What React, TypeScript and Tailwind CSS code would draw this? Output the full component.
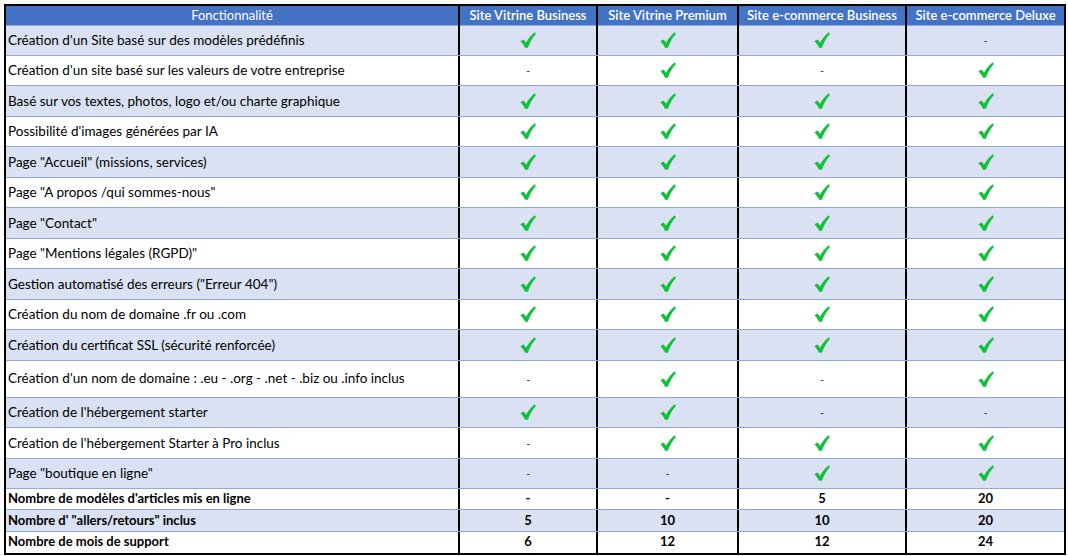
import React from "react";

type Cell = boolean | string;

const rows: { label: string; cells: Cell[]; tall?: boolean; bold?: boolean }[] = [
  { label: "Création d'un Site basé sur des modèles prédéfinis", cells: [true, true, true, false] },
  { label: "Création d'un site basé sur les valeurs de votre entreprise", cells: [false, true, false, true] },
  { label: "Basé sur vos textes, photos, logo et/ou charte graphique", cells: [true, true, true, true] },
  { label: "Possibilité d'images générées par IA", cells: [true, true, true, true] },
  { label: 'Page "Accueil" (missions, services)', cells: [true, true, true, true] },
  { label: 'Page "A propos /qui sommes-nous"', cells: [true, true, true, true] },
  { label: 'Page "Contact"', cells: [true, true, true, true] },
  { label: 'Page "Mentions légales (RGPD)"', cells: [true, true, true, true] },
  { label: 'Gestion automatisé des erreurs ("Erreur 404")', cells: [true, true, true, true] },
  { label: "Création du nom de domaine .fr ou .com", cells: [true, true, true, true] },
  { label: "Création du certificat SSL (sécurité renforcée)", cells: [true, true, true, true] },
  {
    label: "Création d'un nom de domaine :  .eu - .org - .net - .biz ou .info inclus",
    cells: [false, true, false, true],
    tall: true,
  },
  { label: "Création de l'hébergement starter", cells: [true, true, false, false] },
  { label: "Création de l'hébergement Starter à Pro inclus", cells: [false, true, true, true] },
  { label: 'Page "boutique en ligne"', cells: [false, false, true, true] },
  { label: "Nombre de modèles d'articles mis en ligne", cells: ["-", "-", "5", "20"], bold: true },
  { label: 'Nombre d\' "allers/retours" inclus', cells: ["5", "10", "10", "20"], bold: true },
  { label: "Nombre de mois de support", cells: ["6", "12", "12", "24"], bold: true },
];

const headers = [
  "Site Vitrine Business",
  "Site Vitrine Premium",
  "Site e-commerce Business",
  "Site e-commerce Deluxe",
];

const cols = "grid grid-cols-[454px_138px_141px_168px_157px]";

const Check = () => (
  <svg width="16" height="16" viewBox="0 0 16 16">
    <path
      d="M0.4 9.6 C1.8 8.2 3 7.7 4.1 7.9 L6 10.8 C8.2 6.6 11.2 3 14.8 0.3 L15.9 1.9 C12.7 5.3 9.9 9.8 7.9 15.7 L5 15.7 C3.8 13.1 2.4 11.3 0.4 9.6 Z"
      fill="#10c23a"
    />
  </svg>
);

const Value = ({ v, bold }: { v: Cell; bold?: boolean }) => {
  if (v === true) return <Check />;
  if (v === false) return <span className="text-[10px] leading-none text-black">-</span>;
  return <span className={bold ? "font-bold" : ""}>{v}</span>;
};

export default function App() {
  return (
    <div className="min-h-[556px] bg-white pl-[4px] pt-[4px] font-['Lato',sans-serif] text-[13.5px] text-black">
      <div className="w-[1062px] border-2 border-black">
        {/* header */}
        <div className={`${cols} h-[19px] bg-[#4472c4] text-[13px] text-white`}>
          <div className="flex items-center justify-center border-r-2 border-black">Fonctionnalité</div>
          {headers.map((h, i) => (
            <div
              key={h}
              className={`flex items-center justify-center font-semibold ${i < 3 ? "border-r-2 border-black" : ""}`}
            >
              {h}
            </div>
          ))}
        </div>

        {rows.map((r, ri) => (
          <div
            key={ri}
            className={`${cols} ${r.tall ? "h-[37px]" : r.bold ? "h-[21.3px] text-[13px]" : "h-[30.5px]"} ${
              ri % 2 === 0 ? "bg-[#d9e1f2]" : "bg-white"
            } ${ri < rows.length - 1 ? "border-b border-[#8ea9db]" : ""} ${ri === 0 ? "border-t border-[#8ea9db]" : ""}`}
          >
            <div className={`flex items-center border-r-2 border-black pl-[2px] ${r.bold ? "font-bold" : ""}`}>
              {r.label}
            </div>
            {r.cells.map((c, ci) => (
              <div
                key={ci}
                className={`flex items-center justify-center ${ci < 3 ? "border-r-2 border-black" : ""} ${
                  r.bold ? "font-bold" : ""
                }`}
              >
                <Value v={c} bold={r.bold} />
              </div>
            ))}
          </div>
        ))}
      </div>
    </div>
  );
}
